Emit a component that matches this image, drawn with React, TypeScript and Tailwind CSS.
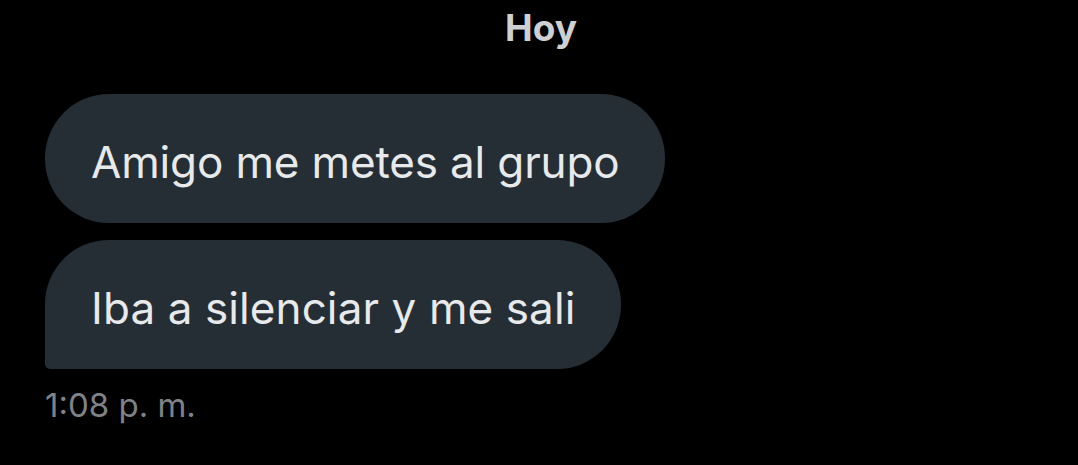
export default function App() {
  return (
    <div className="w-[1078px] h-[465px] bg-black overflow-hidden" style={{ fontFamily: "Inter, 'Liberation Sans', sans-serif" }}>
      <div className="flex justify-center pt-[5px]">
        <span className="text-[37px] font-bold text-[#cfd0d1] leading-[46px]" style={{ marginLeft: 4 }}>Hoy</span>
      </div>
      <div className="flex flex-col items-start pl-[45px] pt-[43px] gap-[17px]">
        <div className="h-[129px] rounded-[64px] bg-[#252d35] flex items-center pl-[46px] pr-[46px] pt-[6px]">
          <span className="text-[44px] tracking-[-0.15px] text-[#e7e9ea] leading-none">Amigo me metes al grupo</span>
        </div>
        <div className="h-[129px] rounded-[64px] rounded-bl-[5px] bg-[#252d35] flex items-center pl-[46px] pr-[46px] pt-[6px]">
          <span className="text-[44px] tracking-[0.1px] text-[#e7e9ea] leading-none">Iba a silenciar y me sali</span>
        </div>
      </div>
      <div className="pl-[45px] pt-[20px]">
        <span className="text-[33px] text-[#7f8387] leading-none">1:08 p. m.</span>
      </div>
    </div>
  );
}
